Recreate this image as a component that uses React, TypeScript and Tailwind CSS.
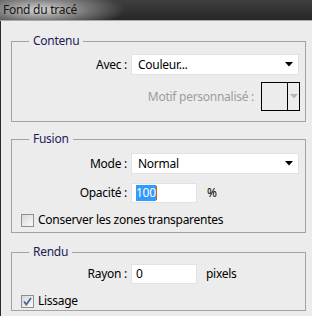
import React from "react";

function Caret({ color = "#000" }: { color?: string }) {
  return (
    <svg width="8" height="5" viewBox="0 0 8 5" className="shrink-0">
      <path d="M0 0h8L4 4.5z" fill={color} />
    </svg>
  );
}

function Select({ value }: { value: string }) {
  return (
    <div className="flex h-[21px] w-[168px] items-center justify-between border border-[#e2e2e2] bg-white pl-[6px] pr-[5px] text-black">
      <span>{value}</span>
      <Caret />
    </div>
  );
}

function Field({ children }: { children: React.ReactNode }) {
  return (
    <div className="flex h-[20px] w-[66px] items-center border border-[#e2e2e2] bg-white pl-[4px] text-black">
      {children}
    </div>
  );
}

function Checkbox({ checked, label }: { checked?: boolean; label: string }) {
  return (
    <div className="flex items-center gap-[4px] pl-[9px]">
      <div className="flex h-[13px] w-[13px] items-center justify-center border border-[#8f8f8f] bg-gradient-to-br from-[#d8d8d8] to-[#fafafa]">
        {checked && (
          <svg width="9" height="9" viewBox="0 0 9 9">
            <path d="M1 4.5l2.3 3L8 1" fill="none" stroke="#4c61a0" strokeWidth="1.8" />
          </svg>
        )}
      </div>
      <span className="text-black">{label}</span>
    </div>
  );
}

function Group({ title, children, className }: { title: string; children: React.ReactNode; className?: string }) {
  return (
    <div className={`relative ml-[10px] mr-[6px] border border-[#a3a3a3] ${className ?? ""}`}>
      {/* label sits over the top border */}
      <span className="absolute -top-[9px] left-[17px] bg-[#ececec] px-[4px] text-[#1c1b57]">{title}</span>
      {children}
    </div>
  );
}

export default function App() {
  return (
    <div className="h-[316px] w-[312px] overflow-hidden bg-[#ececec] text-[12px] leading-[16px] tracking-[-0.27px] [font-family:'Noto_Sans',sans-serif]">
      {/* title bar */}
      <div className="flex h-[21px] items-center border-b border-[#a9a9a9] bg-[radial-gradient(ellipse_85px_20px_at_40px_10px,rgba(222,222,222,0.95),rgba(200,200,200,0.45)_55%,transparent),linear-gradient(#3f3f3f,#272727)] pb-px pl-[3px] text-[#1b1510]">
        Fond du tracé
      </div>

      <div className="flex h-[295px] flex-col border-l border-[#2a2a2a]">
        <Group title="Contenu" className="mt-[20px] h-[81px]">
          <div className="mt-[12px] flex items-center">
            <span className="w-[119px] pr-[4px] text-right text-black">Avec :</span>
            <Select value="Couleur..." />
          </div>
          <div className="mt-[7px] flex items-center justify-end gap-[7px] pr-[5px]">
            <span className="text-[#9d9d9d]">Motif personnalisé :</span>
            <div className="flex h-[29px] w-[39px] border border-black">
              <div className="w-[26px] border-r border-black" />
              <div className="flex flex-1 items-center justify-center">
                <Caret color="#b5b5b5" />
              </div>
            </div>
          </div>
        </Group>

        <Group title="Fusion" className="mt-[17px] h-[94px]">
          <div className="mt-[13px] flex items-center">
            <span className="w-[119px] pr-[4px] text-right text-black">Mode :</span>
            <Select value="Normal" />
          </div>
          <div className="mt-[9px] flex items-center">
            <span className="w-[119px] pr-[4px] text-right text-black">Opacité :</span>
            <Field>
              <span className="bg-[#3399ff] text-white">100</span>
              <span className="h-[14px] w-px bg-[#c86a10]" />
            </Field>
            <span className="ml-[10px] text-black">%</span>
          </div>
          <div className="mt-[9px]">
            <Checkbox label="Conserver les zones transparentes" />
          </div>
        </Group>

        <Group title="Rendu" className="mt-[19px] h-[59px]">
          <div className="mt-[11px] flex items-center">
            <span className="w-[119px] pr-[4px] text-right text-black">Rayon :</span>
            <Field>
              <span>0</span>
            </Field>
            <span className="ml-[9px] text-black">pixels</span>
          </div>
          <div className="mt-[9px]">
            <Checkbox checked label="Lissage" />
          </div>
        </Group>
      </div>
    </div>
  );
}
